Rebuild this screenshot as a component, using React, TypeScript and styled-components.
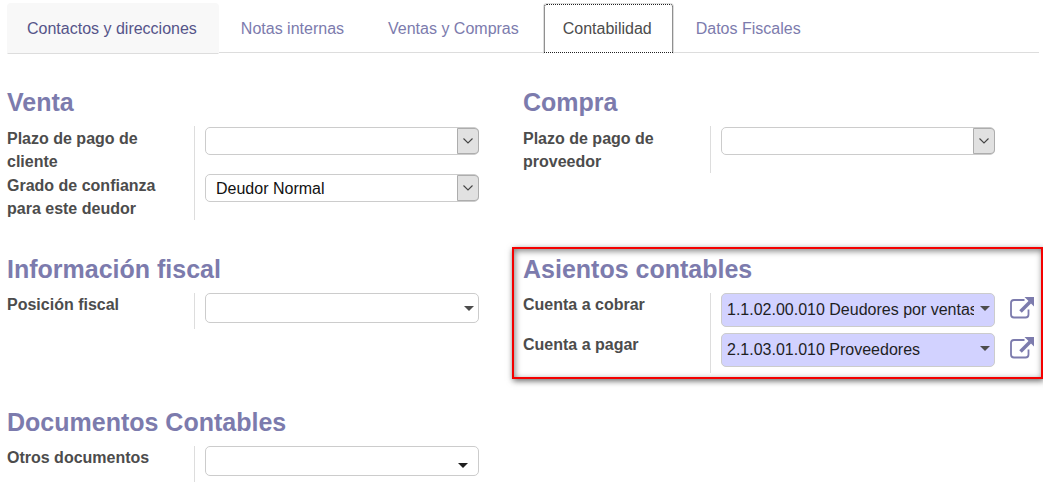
import React, { useState } from "react";
import styled, { createGlobalStyle } from "styled-components";

const accent = "#7c7bad";
const line = "#dddddd";
const fieldBorder = "#cccccc";

const GlobalStyle = createGlobalStyle`
  *, *::before, *::after { box-sizing: border-box; }
  body {
    margin: 0;
    background: #ffffff;
    color: #4c4c4c;
    font-family: "Liberation Sans", Arial, Helvetica, sans-serif;
    font-size: 16px;
    line-height: 23px;
  }
  button, input, select { font: inherit; }
`;

const Page = styled.main`
  padding: 3px 4px 0 7px;
`;

const TabList = styled.div`
  display: flex;
  gap: 2px;
  border-bottom: 1px solid ${line};
`;

const Tab = styled.button<{ $state?: "hovered" | "active" }>`
  margin: 0 0 -2px;
  padding: 13px 21px 13px 19px;
  border: 1px solid transparent;
  border-radius: 4px 4px 0 0;
  white-space: nowrap;
  cursor: pointer;
  background: transparent;
  color: ${accent};
  outline: none;
  ${({ $state }) =>
    $state === "hovered" &&
    `
    background: #f8f8f8;
    border-color: #f8f8f8 #f8f8f8 ${line};
    color: #555489;
  `}
  ${({ $state }) =>
    $state === "active" &&
    `
    background: #ffffff;
    border-color: ${line} ${line} transparent;
    color: #4c4c4c;
    outline: 1px dotted #222222;
    outline-offset: -2px;
  `}
`;

const Groups = styled.div`
  display: grid;
  grid-template-columns: repeat(2, minmax(0, 1fr));
  row-gap: 35px;
  padding-top: 35px;
`;

const Group = styled.section<{ $highlight?: boolean }>`
  position: relative;
  ${({ $highlight }) =>
    $highlight &&
    `
    &::after {
      content: "";
      position: absolute;
      inset: -8px -4px -6px -11px;
      border: 2px solid #f40000;
      box-shadow: 1px 2px 6px rgba(0, 0, 0, 0.6), inset 1px 2px 6px rgba(0, 0, 0, 0.5);
      pointer-events: none;
    }
  `}
`;

const Heading = styled.h2`
  margin: 0 0 10px;
  font-size: 25px;
  line-height: 28px;
  font-weight: bold;
  color: ${accent};
`;

const Row = styled.div<{ $height: number }>`
  display: grid;
  grid-template-columns: 187px minmax(0, 1fr);
  min-height: ${({ $height }) => $height}px;
`;

const Label = styled.label<{ $inset?: boolean }>`
  padding-top: ${({ $inset }) => ($inset ? 1 : 0)}px;
  padding-right: 20px;
  font-weight: bold;
`;

const Field = styled.div<{ $inset?: boolean }>`
  display: grid;
  grid-template-columns: minmax(0, 1fr) 44px;
  align-items: start;
  padding-left: 10px;
  padding-top: ${({ $inset }) => ($inset ? 1 : 0)}px;
  border-left: 1px solid ${line};
`;

const Control = styled.div`
  display: grid;
  align-items: center;
  > * { grid-area: 1 / 1; }
`;

const Select = styled.select`
  appearance: none;
  width: 100%;
  height: 28px;
  margin: 0;
  padding: 0 24px 0 10px;
  border: 1px solid ${fieldBorder};
  border-radius: 5px;
  background: #ffffff;
  color: #111111;
`;

const SelectArrow = styled.span`
  justify-self: end;
  display: flex;
  align-items: center;
  justify-content: center;
  width: 22px;
  height: 26px;
  border: 1px solid #adadad;
  border-radius: 0 4px 4px 0;
  background: #e1e1e1;
  pointer-events: none;
`;

const Input = styled.input<{ $height: number; $required?: boolean }>`
  width: 100%;
  height: ${({ $height }) => $height}px;
  margin: 0;
  padding: 0 20px 0 5px;
  border: 1px solid ${fieldBorder};
  border-radius: 5px;
  background: ${({ $required }) => ($required ? "#d2d2ff" : "#ffffff")};
  color: #1f1f1f;
`;

type CaretTone = "required" | "dark";

const CaretIcon = styled.svg<{ $tone?: CaretTone }>`
  justify-self: end;
  margin-right: ${({ $tone }) => ($tone === "dark" ? 11 : 5)}px;
  margin-top: ${({ $tone }) => ($tone === "dark" ? 8 : 0)}px;
  margin-bottom: ${({ $tone }) => ($tone === "required" ? 3 : 0)}px;
  fill: ${({ $tone }) => ($tone === "dark" ? "#1f1f1f" : "#4c4c4c")};
  pointer-events: none;
`;

const LinkButton = styled.button`
  justify-self: end;
  display: flex;
  margin: 4px 5px 0 0;
  padding: 0;
  border: 0;
  background: transparent;
  color: ${accent};
  cursor: pointer;
`;

const Caret = ({ tone }: { tone?: CaretTone }) => (
  <CaretIcon $tone={tone} width="10" height="5" viewBox="0 0 10 5" aria-hidden="true">
    <path d="M0 0h10L5 5z" />
  </CaretIcon>
);

const ExternalLink = ({ label }: { label: string }) => (
  <LinkButton type="button" aria-label={label}>
    <svg width="24" height="22" viewBox="0 0 24 22" fill="none" aria-hidden="true">
      <path
        d="M14.5 3H4a3 3 0 0 0-3 3v11.5a3 3 0 0 0 3 3h11.5a3 3 0 0 0 3-3v-5"
        stroke="currentColor"
        strokeWidth="1.8"
      />
      <path d="M10.5 14.5L20 5" stroke="currentColor" strokeWidth="3.6" />
      <path d="M14.5 0H24v9.5z" fill="currentColor" />
    </svg>
  </LinkButton>
);

type SelectRowProps = { id: string; label: string; options: string[]; initial?: string };

const SelectRow = ({ id, label, options, initial = "" }: SelectRowProps) => (
  <Row $height={47}>
    <Label htmlFor={id} $inset>{label}</Label>
    <Field $inset>
      <Control>
        <Select id={id} defaultValue={initial}>
          {options.map((o) => (
            <option key={o} value={o}>{o}</option>
          ))}
        </Select>
        <SelectArrow>
          <svg width="10" height="6" viewBox="0 0 10 6" fill="none" aria-hidden="true">
            <path d="M0.5 0.5L5 5L9.5 0.5" stroke="#444444" strokeWidth="1.1" />
          </svg>
        </SelectArrow>
      </Control>
    </Field>
  </Row>
);

type LookupRowProps = {
  id: string;
  label: string;
  value?: string;
  tone?: CaretTone;
};

const LookupRow = ({ id, label, value = "", tone }: LookupRowProps) => {
  const required = tone === "required";
  return (
    <Row $height={required ? 40 : 36}>
      <Label htmlFor={id}>{label}</Label>
      <Field>
        <Control>
          <Input
            id={id}
            type="text"
            role="combobox"
            aria-expanded={false}
            defaultValue={value}
            $height={required ? 34 : 30}
            $required={required}
          />
          <Caret tone={tone} />
        </Control>
        {required && <ExternalLink label={`Abrir ${label}`} />}
      </Field>
    </Row>
  );
};

const tabs = [
  "Contactos y direcciones",
  "Notas internas",
  "Ventas y Compras",
  "Contabilidad",
  "Datos Fiscales",
];

export default function App() {
  const [active, setActive] = useState("Contabilidad");
  const [hovered, setHovered] = useState(tabs[0]);

  return (
    <>
      <GlobalStyle />
      <Page>
        <TabList role="tablist">
          {tabs.map((tab) => (
            <Tab
              key={tab}
              type="button"
              role="tab"
              aria-selected={tab === active}
              $state={tab === active ? "active" : tab === hovered ? "hovered" : undefined}
              onClick={() => setActive(tab)}
              onMouseEnter={() => setHovered(tab)}
            >
              {tab}
            </Tab>
          ))}
        </TabList>
        <Groups>
          <Group>
            <Heading>Venta</Heading>
            <SelectRow id="plazo-cliente" label="Plazo de pago de cliente" options={[""]} />
            <SelectRow
              id="confianza"
              label="Grado de confianza para este deudor"
              options={["Deudor Normal"]}
              initial="Deudor Normal"
            />
          </Group>
          <Group>
            <Heading>Compra</Heading>
            <SelectRow id="plazo-proveedor" label="Plazo de pago de proveedor" options={[""]} />
          </Group>
          <Group>
            <Heading>Información fiscal</Heading>
            <LookupRow id="posicion" label="Posición fiscal" />
          </Group>
          <Group $highlight>
            <Heading>Asientos contables</Heading>
            <LookupRow
              id="cobrar"
              label="Cuenta a cobrar"
              value="1.1.02.00.010 Deudores por ventas"
              tone="required"
            />
            <LookupRow
              id="pagar"
              label="Cuenta a pagar"
              value="2.1.03.01.010 Proveedores"
              tone="required"
            />
          </Group>
          <Group>
            <Heading>Documentos Contables</Heading>
            <LookupRow id="otros" label="Otros documentos" tone="dark" />
          </Group>
        </Groups>
      </Page>
    </>
  );
}
